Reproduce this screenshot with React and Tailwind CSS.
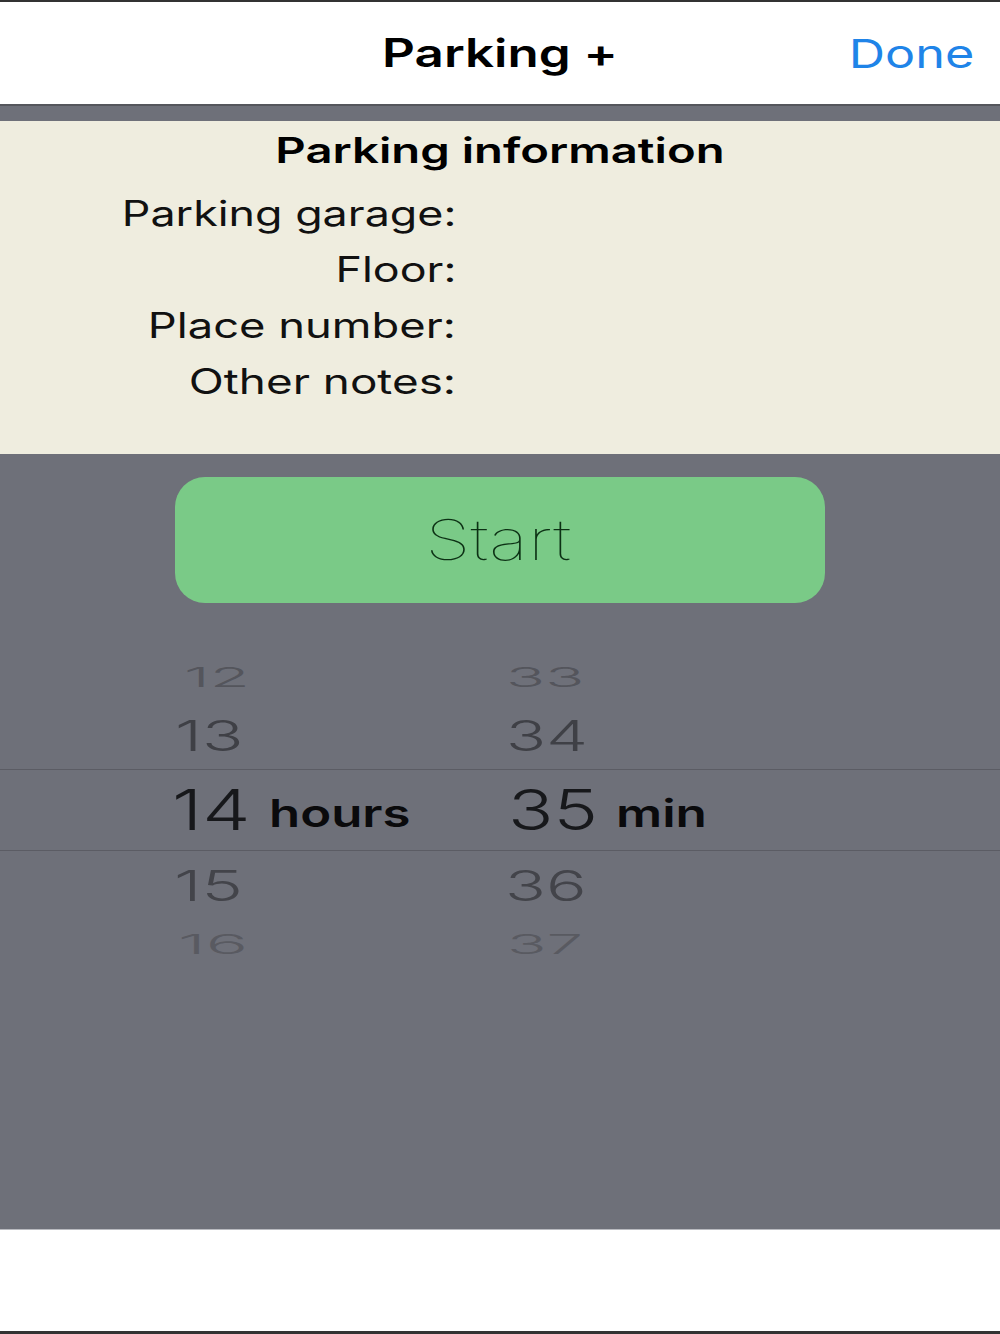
export default function App() {
  const font = "font-['Inter','Liberation_Sans',sans-serif]";
  return (
    <div className={`w-[1000px] h-[1334px] flex flex-col bg-[#6e7079] overflow-hidden ${font}`}>
      <div className="h-[2px] bg-[#333333]" />
      <header className="h-[104px] bg-white flex items-center justify-center relative border-b-[2px] border-[#55565c]">
        <h1 className="text-[39px] leading-none font-semibold text-black scale-x-[1.31] -mt-[2px]">Parking +</h1>
        <span className="absolute right-[26px] top-[32px] text-[39px] leading-none text-[#1f84e8] scale-x-[1.29] origin-right">Done</span>
      </header>
      <div className="h-[15px]" />
      <section className="h-[333px] bg-[#efeddf] flex flex-col">
        <h2 className="text-center text-[35px] leading-[58px] font-semibold text-black scale-x-[1.35]">Parking information</h2>
        <div className="flex flex-col w-[456px] items-end text-[35px] leading-[56px] text-[#111111] mt-[8px]">
          <span className="scale-x-[1.28] origin-right -mt-[2px]">Parking garage:</span>
          <span className="scale-x-[1.28] origin-right">Floor:</span>
          <span className="scale-x-[1.295] origin-right">Place number:</span>
          <span className="scale-x-[1.31] origin-right">Other notes:</span>
        </div>
      </section>
      <div className="flex justify-center pt-[23px]">
        <button className="w-[650px] h-[126px] rounded-[30px] bg-[#7aca87] flex items-center justify-center text-[56px] font-thin text-[#0c3014]">
          <span className="scale-x-[1.32] -ml-[4px]">Start</span>
        </button>
      </div>
      <div className="flex flex-col mt-[44px]">
        <div className="h-[60px] flex items-center font-light">
          <Num className="w-[325px] ml-[184px] text-[38px] scale-x-[1.72] scale-y-[0.72] text-[#54555c]">12</Num>
          <Num className="-ml-[3px] text-[38px] scale-x-[1.7] scale-y-[0.72] text-[#54555c]">33</Num>
        </div>
        <div className="h-[62px] flex items-center font-light pb-[6px]">
          <Num className="w-[335px] ml-[175px] text-[46px] scale-x-[1.49] scale-y-[0.92] text-[#3f4046]">13</Num>
          <Num className="-ml-[4px] text-[46px] scale-x-[1.44] scale-y-[0.92] text-[#3f4046]">34</Num>
        </div>
        <div className="h-[82px] flex items-center border-y border-[#5b5c64]">
          <div className="w-[336px] ml-[172px] flex items-center">
            <span className="text-[56px] leading-none font-light text-[#17181b] scale-x-[1.37] origin-left w-[97px]">14</span>
            <span className="text-[38px] leading-none font-semibold text-[#0a0a0c] scale-x-[1.34] origin-left -mb-[6px]">hours</span>
          </div>
          <div className="flex items-center">
            <span className="text-[56px] leading-none font-light text-[#17181b] scale-x-[1.34] origin-left w-[108px]">35</span>
            <span className="text-[38px] leading-none font-semibold text-[#0a0a0c] scale-x-[1.35] origin-left -mb-[6px]">min</span>
          </div>
        </div>
        <div className="h-[67px] flex items-center font-light">
          <Num className="w-[335px] ml-[174px] text-[46px] scale-x-[1.52] scale-y-[0.92] text-[#43444a]">15</Num>
          <Num className="-ml-[4px] text-[46px] scale-x-[1.47] scale-y-[0.92] text-[#43444a]">36</Num>
        </div>
        <div className="h-[52px] flex items-center font-light">
          <Num className="w-[332px] ml-[178px] text-[38px] scale-x-[1.85] scale-y-[0.72] text-[#595a61]">16</Num>
          <Num className="-ml-[3px] text-[38px] scale-x-[1.72] scale-y-[0.72] text-[#595a61]">37</Num>
        </div>
      </div>
      <div className="flex-1" />
      <footer className="h-[105px] bg-white border-t-[1px] border-[#b9bac0] border-b-[3px] border-b-[#333333]" />
    </div>
  );
}

function Num({ className, children }) {
  return <span className={`inline-block leading-none origin-left ${className}`}>{children}</span>;
}
